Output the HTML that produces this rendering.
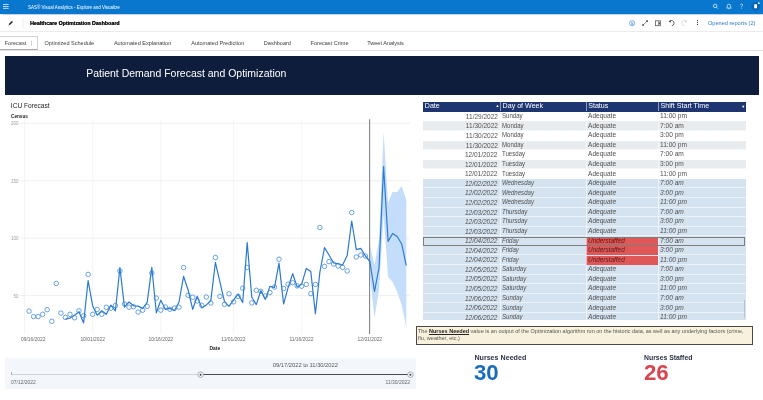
<!DOCTYPE html>
<html><head><meta charset="utf-8">
<style>
*{margin:0;padding:0;box-sizing:border-box}
html,body{width:763px;height:400px;overflow:hidden;background:#fff;font-family:"Liberation Sans",sans-serif;color:#333}
.a{position:absolute;white-space:nowrap}
#topbar{position:absolute;left:0;top:0;width:763px;height:13.8px;background:#0a77cf;box-shadow:0 0.6px 1px rgba(10,80,160,0.25);z-index:2}
#row2{position:absolute;left:0;top:13.2px;width:763px;height:18.8px;background:#fff;border-bottom:1px solid #ebebeb}
#tabs{position:absolute;left:0;top:50px;width:763px;height:0.8px;background:#e3e3e3}
.tab{position:absolute;top:39.6px;font-size:5.55px;color:#3d3d3d;line-height:7px}
#banner{position:absolute;left:5px;top:56.3px;width:754px;height:39.1px;background:#0f1d3d}
#table{position:absolute;left:422.8px;top:101.6px;width:323.4px;height:218px;overflow:hidden}
.hdr{position:absolute;left:0;top:0;width:323.4px;height:10.3px;background:#1d3671;color:#fff;font-size:7.1px;line-height:10.3px}
.hdr span{position:absolute;top:-0.7px}
.r{position:absolute;left:0;width:323.4px;height:9.57px;font-size:6.7px;line-height:9.57px;color:#505050;border-bottom:0.5px solid rgba(255,255,255,0.5)}
.r span{position:absolute;top:0.3px}
.it{font-style:italic}
.c1{right:248.5px;text-align:right;font-size:6.9px;margin-top:-0.4px;transform:scaleX(0.945);transform-origin:100% 50%}
.c2{left:79.1px;font-size:7.1px;transform:scaleX(0.855);transform-origin:0 50%}
.c3{left:165.2px;font-size:7.1px;transform:scaleX(0.925);transform-origin:0 50%}
.c4{left:237.6px;font-size:7.1px;transform:scaleX(0.93);transform-origin:0 50%}
.us{left:163.7px !important;width:71.5px;background:#e05757;color:#5a1a1a;padding-left:1.6px;height:8.9px;line-height:9.4px;font-size:7.1px;transform:none !important}
.ust{font-weight:normal;display:inline-block;transform:scaleX(0.905);transform-origin:0 50%}
</style></head><body><div id="root" style="position:absolute;left:0;top:0;width:763px;height:400px;will-change:transform;overflow:hidden">

<div id="topbar"></div>
<svg class="a" style="left:0;top:0;z-index:3" width="20" height="14" viewBox="0 0 20 14">
  <rect x="3" y="4" width="5.6" height="0.8" fill="#fff" opacity="0.9"/>
  <rect x="3" y="6" width="5.6" height="0.8" fill="#fff" opacity="0.9"/>
  <rect x="3" y="7.9" width="5.6" height="0.8" fill="#fff" opacity="0.9"/>
</svg>
<div class="a" style="z-index:3;left:28px;top:3.5px;font-size:5.2px;line-height:6px;color:#fff;transform-origin:0 0;transform:scaleX(0.866)">SAS® Visual Analytics - Explore and Visualize</div>
<svg class="a" style="left:705px;top:0;z-index:3" width="58" height="14" viewBox="705 0 58 14">
  <circle cx="715.1" cy="5.9" r="1.75" fill="none" stroke="#fff" stroke-width="0.75" opacity="0.9"/>
  <line x1="716.4" y1="7.2" x2="717.8" y2="8.6" stroke="#fff" stroke-width="0.8" opacity="0.9"/>
  <path d="M726.5 8.1 L727.2 7.3 L727.2 6.1 Q727.3 4.2 728.9 4.2 Q730.5 4.2 730.6 6.1 L730.6 7.3 L731.3 8.1 Z" fill="none" stroke="#fff" stroke-width="0.7" opacity="0.9"/>
  <circle cx="728.9" cy="8.8" r="0.55" fill="#fff" opacity="0.9"/>
  <path d="M740.4 5.1 Q740.6 4 741.6 4 Q742.7 4.1 742.6 5.2 Q742.5 6 741.6 6.4 L741.6 7.4" fill="none" stroke="#fff" stroke-width="0.7" opacity="0.85"/>
  <circle cx="741.6" cy="8.5" r="0.4" fill="#fff" opacity="0.85"/>
  <circle cx="755.6" cy="6.5" r="4.4" fill="#0764b3"/>
  <rect x="754.2" y="4.3" width="2.8" height="4" rx="0.3" fill="#fff"/>
  <circle cx="758.8" cy="3.2" r="0.85" fill="#fff"/>
</svg>

<div id="row2"></div>
<svg class="a" style="left:0;top:13px" width="30" height="18" viewBox="0 13 30 18">
  <path d="M8.4 25.4 L9.3 23.4 L11.9 20.9 L13 22 L10.4 24.5 Z" fill="#222"/>
  <line x1="23.1" y1="17.8" x2="23.1" y2="28.4" stroke="#e6e6e6" stroke-width="0.7"/>
</svg>
<div class="a" style="left:29.9px;top:19.7px;font-size:5.5px;line-height:7px;font-weight:bold;color:#111;transform:scaleX(0.96);transform-origin:0 0;text-shadow:0.2px 0 0 #111">Healthcare Optimization Dashboard</div>
<svg class="a" style="left:620px;top:13px" width="85" height="18" viewBox="620 13 85 18">
  <circle cx="632.1" cy="23.2" r="2.6" fill="none" stroke="#5c9de0" stroke-width="0.8"/>
  <text x="632.1" y="24.9" font-size="4.2" fill="#5c9de0" text-anchor="middle" font-family="Liberation Sans" font-weight="bold">S</text>
  <line x1="643" y1="25.2" x2="647.2" y2="21" stroke="#333" stroke-width="0.6"/>
  <rect x="642.3" y="24.3" width="1.5" height="1.5" fill="#333"/>
  <rect x="646.4" y="20.3" width="1.5" height="1.5" fill="#333"/>
  <rect x="655.6" y="20.8" width="4.9" height="4.9" fill="none" stroke="#555" stroke-width="0.75"/>
  <line x1="658.4" y1="21" x2="658.4" y2="25.5" stroke="#555" stroke-width="0.6"/>
  <rect x="658.8" y="22.2" width="1.2" height="2.2" fill="#555"/>
  <path d="M670.6 20.9 Q671.6 20.2 672.6 20.6 Q674.2 21.4 674.1 23.3 Q673.9 25.2 671.8 25.7" fill="none" stroke="#3a3a3a" stroke-width="0.8"/>
  <path d="M668.7 21.2 L670.9 20.1 L670.6 22.7 Z" fill="#333"/>
  <path d="M685.4 20.9 Q684.4 20.2 683.4 20.6 Q681.8 21.4 681.9 23.3 Q682.1 25.2 684.2 25.7" fill="none" stroke="#cfd3d8" stroke-width="0.8"/>
  <path d="M687.3 21.2 L685.1 20.1 L685.4 22.7 Z" fill="#c4c8cd"/>
  <circle cx="697.5" cy="20.6" r="0.6" fill="#333"/>
  <circle cx="697.5" cy="22.5" r="0.6" fill="#333"/>
  <circle cx="697.5" cy="24.4" r="0.6" fill="#333"/>
</svg>
<div class="a" style="left:707.9px;top:19.9px;font-size:5.63px;line-height:7px;color:#3079c9">Opened reports (2)</div>

<div id="tabs"></div>
<div class="a" style="left:0;top:36px;width:37.5px;height:14px;border:0.6px solid #d2d2d2;border-left:none;border-bottom:0.9px solid #a9acb2;background:#fff"></div>
<div class="tab" style="left:4.7px">Forecast</div>
<svg class="a" style="left:30px;top:40px" width="3" height="7" viewBox="0 0 3 7"><circle cx="1.4" cy="1.3" r="0.45" fill="#777"/><circle cx="1.4" cy="3" r="0.45" fill="#777"/><circle cx="1.4" cy="4.7" r="0.45" fill="#777"/></svg>
<div class="tab" style="left:44.5px">Optimized Schedule</div>
<div class="tab" style="left:113.9px">Automated Explanation</div>
<div class="tab" style="left:191.2px">Automated Prediction</div>
<div class="tab" style="left:263.8px">Dashboard</div>
<div class="tab" style="left:310.6px">Forecast Crime</div>
<div class="tab" style="left:367.2px">Tweet Analysis</div>

<div id="banner"></div>
<div class="a" style="left:86.2px;top:66.6px;font-size:10.47px;line-height:13px;color:#fff">Patient Demand Forecast and Optimization</div>

<!-- chart -->
<div class="a" style="left:10.8px;top:102px;font-size:6.6px;line-height:8px;color:#222">ICU Forecast</div>
<div class="a" style="left:11px;top:113.6px;font-size:4.7px;line-height:6px;font-weight:bold;color:#222">Census</div>
<div class="a" style="left:11px;top:121.3px;font-size:4.5px;line-height:5px;color:#9aa0a8">200</div>
<div class="a" style="left:11px;top:178.8px;font-size:4.5px;line-height:5px;color:#9aa0a8">150</div>
<div class="a" style="left:11px;top:236.2px;font-size:4.5px;line-height:5px;color:#9aa0a8">100</div>
<div class="a" style="left:13.5px;top:293.6px;font-size:4.5px;line-height:5px;color:#9aa0a8">50</div>
<svg class="a" style="left:0;top:0" width="420" height="350" viewBox="0 0 420 350">
<line x1="20" y1="123.3" x2="410" y2="123.3" stroke="#ebebee" stroke-width="0.8"/>
<line x1="20" y1="180.8" x2="410" y2="180.8" stroke="#ebebee" stroke-width="0.8"/>
<line x1="20" y1="238.2" x2="410" y2="238.2" stroke="#ebebee" stroke-width="0.8"/>
<line x1="20" y1="295.6" x2="410" y2="295.6" stroke="#ebebee" stroke-width="0.8"/>
<line x1="24.5" y1="119.5" x2="24.5" y2="334" stroke="#f1f1f4" stroke-width="0.8"/>
<line x1="92.7" y1="119.5" x2="92.7" y2="334" stroke="#f1f1f4" stroke-width="0.8"/>
<line x1="160.8" y1="119.5" x2="160.8" y2="334" stroke="#f1f1f4" stroke-width="0.8"/>
<line x1="233.6" y1="119.5" x2="233.6" y2="334" stroke="#f1f1f4" stroke-width="0.8"/>
<line x1="301.7" y1="119.5" x2="301.7" y2="334" stroke="#f1f1f4" stroke-width="0.8"/>
<line x1="369.9" y1="119.5" x2="369.9" y2="334" stroke="#f1f1f4" stroke-width="0.8"/>
<polygon points="369.9,245.0 374.5,265.0 379.0,240.0 383.6,131.7 388.1,202.5 392.6,192.0 397.2,192.0 401.7,186.0 406.3,200.0 406.3,328.0 401.7,305.0 397.2,292.0 392.6,282.0 388.1,277.0 383.6,215.0 379.0,290.0 374.5,318.0 369.9,275.0" fill="#c4ddfa"/>
<line x1="369.6" y1="119.3" x2="369.6" y2="334" stroke="#6d6f73" stroke-width="0.9"/>
<polyline fill="none" stroke="#2c7ad0" stroke-width="1.2" stroke-linejoin="round" points="65.4,319.2 70.0,318.1 74.5,315.2 79.0,311.7 83.6,323.0 88.1,280.7 92.7,305.9 97.2,315.2 101.8,310.8 106.3,314.3 110.9,305.2 115.4,310.8 119.9,267.6 124.5,307.2 129.0,302.0 133.6,305.8 138.1,306.1 142.7,308.4 147.2,302.3 151.8,267.3 156.3,312.8 160.8,300.2 165.4,309.3 169.9,308.4 174.5,310.7 179.0,302.0 183.6,276.4 188.1,290.0 192.7,309.3 197.2,296.2 201.8,307.9 206.3,304.9 210.8,300.9 215.4,262.3 219.9,281.9 224.5,301.7 229.0,306.4 233.6,299.9 238.1,294.1 242.7,302.5 247.2,242.6 251.8,297.3 256.3,304.6 260.8,290.6 265.4,299.4 269.9,286.4 274.5,287.7 279.0,263.1 283.6,303.9 288.1,287.7 292.7,273.6 297.2,287.1 301.7,284.2 306.3,268.4 310.8,271.6 315.4,313.8 319.9,272.0 324.5,247.6 329.0,255.0 333.6,263.0 338.1,263.6 342.6,265.0 347.2,255.6 351.7,221.0 356.3,249.6 360.8,248.4 365.4,256.0 369.9,261.5 374.5,291.5 379.0,268.0 383.6,166.5 388.1,241.5 392.6,233.5 397.2,236.5 401.7,244.0 406.3,265.6"/>
<circle cx="29.0" cy="311.1" r="2.25" fill="none" stroke="#3a85d4" stroke-width="0.75"/>
<circle cx="33.6" cy="316.6" r="2.25" fill="none" stroke="#3a85d4" stroke-width="0.75"/>
<circle cx="38.1" cy="316.6" r="2.25" fill="none" stroke="#3a85d4" stroke-width="0.75"/>
<circle cx="42.7" cy="314.3" r="2.25" fill="none" stroke="#3a85d4" stroke-width="0.75"/>
<circle cx="47.2" cy="309.7" r="2.25" fill="none" stroke="#3a85d4" stroke-width="0.75"/>
<circle cx="51.8" cy="321.3" r="2.25" fill="none" stroke="#3a85d4" stroke-width="0.75"/>
<circle cx="56.3" cy="283.5" r="2.25" fill="none" stroke="#3a85d4" stroke-width="0.75"/>
<circle cx="60.9" cy="313.1" r="2.25" fill="none" stroke="#3a85d4" stroke-width="0.75"/>
<circle cx="65.4" cy="317.4" r="2.25" fill="none" stroke="#3a85d4" stroke-width="0.75"/>
<circle cx="70.0" cy="314.3" r="2.25" fill="none" stroke="#3a85d4" stroke-width="0.75"/>
<circle cx="74.5" cy="317.8" r="2.25" fill="none" stroke="#3a85d4" stroke-width="0.75"/>
<circle cx="79.0" cy="310.8" r="2.25" fill="none" stroke="#3a85d4" stroke-width="0.75"/>
<circle cx="83.6" cy="315.7" r="2.25" fill="none" stroke="#3a85d4" stroke-width="0.75"/>
<circle cx="88.1" cy="274.4" r="2.25" fill="none" stroke="#3a85d4" stroke-width="0.75"/>
<circle cx="92.7" cy="314.3" r="2.25" fill="none" stroke="#3a85d4" stroke-width="0.75"/>
<circle cx="97.2" cy="309.4" r="2.25" fill="none" stroke="#3a85d4" stroke-width="0.75"/>
<circle cx="101.8" cy="314.3" r="2.25" fill="none" stroke="#3a85d4" stroke-width="0.75"/>
<circle cx="106.3" cy="307.3" r="2.25" fill="none" stroke="#3a85d4" stroke-width="0.75"/>
<circle cx="110.9" cy="308.2" r="2.25" fill="none" stroke="#3a85d4" stroke-width="0.75"/>
<circle cx="115.4" cy="305.5" r="2.25" fill="none" stroke="#3a85d4" stroke-width="0.75"/>
<circle cx="119.9" cy="271.0" r="2.25" fill="none" stroke="#3a85d4" stroke-width="0.75"/>
<circle cx="124.5" cy="304.0" r="2.25" fill="none" stroke="#3a85d4" stroke-width="0.75"/>
<circle cx="129.0" cy="307.2" r="2.25" fill="none" stroke="#3a85d4" stroke-width="0.75"/>
<circle cx="133.6" cy="306.7" r="2.25" fill="none" stroke="#3a85d4" stroke-width="0.75"/>
<circle cx="138.1" cy="312.1" r="2.25" fill="none" stroke="#3a85d4" stroke-width="0.75"/>
<circle cx="142.7" cy="310.2" r="2.25" fill="none" stroke="#3a85d4" stroke-width="0.75"/>
<circle cx="147.2" cy="306.3" r="2.25" fill="none" stroke="#3a85d4" stroke-width="0.75"/>
<circle cx="151.8" cy="273.0" r="2.25" fill="none" stroke="#3a85d4" stroke-width="0.75"/>
<circle cx="156.3" cy="298.1" r="2.25" fill="none" stroke="#3a85d4" stroke-width="0.75"/>
<circle cx="160.8" cy="310.2" r="2.25" fill="none" stroke="#3a85d4" stroke-width="0.75"/>
<circle cx="165.4" cy="307.0" r="2.25" fill="none" stroke="#3a85d4" stroke-width="0.75"/>
<circle cx="169.9" cy="309.3" r="2.25" fill="none" stroke="#3a85d4" stroke-width="0.75"/>
<circle cx="174.5" cy="308.1" r="2.25" fill="none" stroke="#3a85d4" stroke-width="0.75"/>
<circle cx="179.0" cy="307.2" r="2.25" fill="none" stroke="#3a85d4" stroke-width="0.75"/>
<circle cx="183.6" cy="267.6" r="2.25" fill="none" stroke="#3a85d4" stroke-width="0.75"/>
<circle cx="188.1" cy="295.3" r="2.25" fill="none" stroke="#3a85d4" stroke-width="0.75"/>
<circle cx="192.7" cy="297.2" r="2.25" fill="none" stroke="#3a85d4" stroke-width="0.75"/>
<circle cx="197.2" cy="300.9" r="2.25" fill="none" stroke="#3a85d4" stroke-width="0.75"/>
<circle cx="201.8" cy="305.3" r="2.25" fill="none" stroke="#3a85d4" stroke-width="0.75"/>
<circle cx="206.3" cy="297.0" r="2.25" fill="none" stroke="#3a85d4" stroke-width="0.75"/>
<circle cx="210.8" cy="303.0" r="2.25" fill="none" stroke="#3a85d4" stroke-width="0.75"/>
<circle cx="215.4" cy="257.5" r="2.25" fill="none" stroke="#3a85d4" stroke-width="0.75"/>
<circle cx="219.9" cy="296.4" r="2.25" fill="none" stroke="#3a85d4" stroke-width="0.75"/>
<circle cx="224.5" cy="304.3" r="2.25" fill="none" stroke="#3a85d4" stroke-width="0.75"/>
<circle cx="229.0" cy="293.8" r="2.25" fill="none" stroke="#3a85d4" stroke-width="0.75"/>
<circle cx="233.6" cy="301.8" r="2.25" fill="none" stroke="#3a85d4" stroke-width="0.75"/>
<circle cx="238.1" cy="296.4" r="2.25" fill="none" stroke="#3a85d4" stroke-width="0.75"/>
<circle cx="242.7" cy="288.2" r="2.25" fill="none" stroke="#3a85d4" stroke-width="0.75"/>
<circle cx="247.2" cy="267.5" r="2.25" fill="none" stroke="#3a85d4" stroke-width="0.75"/>
<circle cx="251.8" cy="302.9" r="2.25" fill="none" stroke="#3a85d4" stroke-width="0.75"/>
<circle cx="256.3" cy="290.3" r="2.25" fill="none" stroke="#3a85d4" stroke-width="0.75"/>
<circle cx="260.8" cy="291.3" r="2.25" fill="none" stroke="#3a85d4" stroke-width="0.75"/>
<circle cx="265.4" cy="295.9" r="2.25" fill="none" stroke="#3a85d4" stroke-width="0.75"/>
<circle cx="269.9" cy="292.6" r="2.25" fill="none" stroke="#3a85d4" stroke-width="0.75"/>
<circle cx="274.5" cy="287.1" r="2.25" fill="none" stroke="#3a85d4" stroke-width="0.75"/>
<circle cx="279.0" cy="259.2" r="2.25" fill="none" stroke="#3a85d4" stroke-width="0.75"/>
<circle cx="283.6" cy="288.5" r="2.25" fill="none" stroke="#3a85d4" stroke-width="0.75"/>
<circle cx="288.1" cy="284.2" r="2.25" fill="none" stroke="#3a85d4" stroke-width="0.75"/>
<circle cx="292.7" cy="282.7" r="2.25" fill="none" stroke="#3a85d4" stroke-width="0.75"/>
<circle cx="297.2" cy="285.9" r="2.25" fill="none" stroke="#3a85d4" stroke-width="0.75"/>
<circle cx="301.7" cy="286.2" r="2.25" fill="none" stroke="#3a85d4" stroke-width="0.75"/>
<circle cx="306.3" cy="284.4" r="2.25" fill="none" stroke="#3a85d4" stroke-width="0.75"/>
<circle cx="310.8" cy="293.7" r="2.25" fill="none" stroke="#3a85d4" stroke-width="0.75"/>
<circle cx="315.4" cy="284.4" r="2.25" fill="none" stroke="#3a85d4" stroke-width="0.75"/>
<circle cx="319.9" cy="227.5" r="2.25" fill="none" stroke="#3a85d4" stroke-width="0.75"/>
<circle cx="324.5" cy="266.4" r="2.25" fill="none" stroke="#3a85d4" stroke-width="0.75"/>
<circle cx="329.0" cy="261.6" r="2.25" fill="none" stroke="#3a85d4" stroke-width="0.75"/>
<circle cx="333.6" cy="264.0" r="2.25" fill="none" stroke="#3a85d4" stroke-width="0.75"/>
<circle cx="338.1" cy="266.0" r="2.25" fill="none" stroke="#3a85d4" stroke-width="0.75"/>
<circle cx="342.6" cy="267.4" r="2.25" fill="none" stroke="#3a85d4" stroke-width="0.75"/>
<circle cx="347.2" cy="271.0" r="2.25" fill="none" stroke="#3a85d4" stroke-width="0.75"/>
<circle cx="351.7" cy="212.5" r="2.25" fill="none" stroke="#3a85d4" stroke-width="0.75"/>
<circle cx="356.3" cy="257.0" r="2.25" fill="none" stroke="#3a85d4" stroke-width="0.75"/>
<circle cx="360.8" cy="255.0" r="2.25" fill="none" stroke="#3a85d4" stroke-width="0.75"/>
<circle cx="365.4" cy="256.0" r="2.25" fill="none" stroke="#3a85d4" stroke-width="0.75"/>
</svg>
<div class="a" style="left:21px;top:336.5px;font-size:4.9px;line-height:5px;color:#666">09/16/2022</div>
<div class="a" style="left:80.4px;top:336.5px;font-size:4.9px;line-height:5px;color:#666">10/01/2022</div>
<div class="a" style="left:148.6px;top:336.5px;font-size:4.9px;line-height:5px;color:#666">10/16/2022</div>
<div class="a" style="left:221.3px;top:336.5px;font-size:4.9px;line-height:5px;color:#666">11/01/2022</div>
<div class="a" style="left:289.4px;top:336.5px;font-size:4.9px;line-height:5px;color:#666">11/16/2022</div>
<div class="a" style="left:357.6px;top:336.5px;font-size:4.9px;line-height:5px;color:#666">12/01/2022</div>
<div class="a" style="left:209.5px;top:345.5px;font-size:4.9px;line-height:5px;font-weight:bold;color:#222">Date</div>

<!-- slider -->
<div class="a" style="left:5px;top:357.8px;width:411.4px;height:31.2px;background:#f3f6fb"></div>
<div class="a" style="left:272.8px;top:361.6px;font-size:5.76px;line-height:6px;color:#555">09/17/2022 to 11/30/2022</div>
<div class="a" style="left:11px;top:373.8px;width:189.4px;height:1.3px;background:#cfd2d7"></div>
<div class="a" style="left:11px;top:372px;width:0.7px;height:3px;background:#b0b4ba"></div>
<div class="a" style="left:200.4px;top:373.8px;width:210px;height:1.3px;background:#474b53"></div>
<svg class="a" style="left:195px;top:369px" width="220" height="11" viewBox="195 369 220 11">
  <circle cx="200.6" cy="374.7" r="2.75" fill="#fff" stroke="#8d9097" stroke-width="0.75"/>
  <circle cx="200.6" cy="374.7" r="1.05" fill="#3d4048"/>
  <circle cx="410.4" cy="374.7" r="2.75" fill="#fff" stroke="#8d9097" stroke-width="0.75"/>
  <circle cx="410.4" cy="374.7" r="1.05" fill="#3d4048"/>
</svg>
<div class="a" style="left:11px;top:379.7px;font-size:4.96px;line-height:5px;color:#666">07/12/2022</div>
<div class="a" style="left:385.6px;top:379.7px;font-size:4.96px;line-height:5px;color:#666">11/30/2022</div>

<!-- table -->
<div id="table">
<div class="hdr">
  <span style="left:2px">Date</span>
  <span style="left:72.6px;top:-0.3px;font-size:4px">▲</span>
  <span style="left:77.4px;width:0.8px;height:10.3px;background:#8c9ab8"></span>
  <span style="left:79.8px">Day of Week</span>
  <span style="left:163.6px;width:0.8px;height:10.3px;background:#8c9ab8"></span>
  <span style="left:165.4px">Status</span>
  <span style="left:235.7px;width:0.8px;height:10.3px;background:#8c9ab8"></span>
  <span style="left:237.8px">Shift Start Time</span>
  <span style="left:318.5px;top:0;font-size:4px">▼</span>
</div>
<div class="r" style="top:10.30px;background:#ffffff">
<span class="c1">11/29/2022</span><span class="c2">Sunday</span>
<span class="c3">Adequate</span>
<span class="c4">11:00 pm</span></div>
<div class="r" style="top:19.87px;background:#e9ecef">
<span class="c1">11/30/2022</span><span class="c2">Monday</span>
<span class="c3">Adequate</span>
<span class="c4">7:00 am</span></div>
<div class="r" style="top:29.44px;background:#ffffff">
<span class="c1">11/30/2022</span><span class="c2">Monday</span>
<span class="c3">Adequate</span>
<span class="c4">3:00 pm</span></div>
<div class="r" style="top:39.01px;background:#e9ecef">
<span class="c1">11/30/2022</span><span class="c2">Monday</span>
<span class="c3">Adequate</span>
<span class="c4">11:00 pm</span></div>
<div class="r" style="top:48.58px;background:#ffffff">
<span class="c1">12/01/2022</span><span class="c2">Tuesday</span>
<span class="c3">Adequate</span>
<span class="c4">7:00 am</span></div>
<div class="r" style="top:58.15px;background:#e9ecef">
<span class="c1">12/01/2022</span><span class="c2">Tuesday</span>
<span class="c3">Adequate</span>
<span class="c4">3:00 pm</span></div>
<div class="r" style="top:67.72px;background:#ffffff">
<span class="c1">12/01/2022</span><span class="c2">Tuesday</span>
<span class="c3">Adequate</span>
<span class="c4">11:00 pm</span></div>
<div class="r it" style="top:77.29px;background:#d5e3f1">
<span class="c1">12/02/2022</span><span class="c2">Wednesday</span>
<span class="c3">Adequate</span>
<span class="c4">7:00 am</span></div>
<div class="r it" style="top:86.86px;background:#d5e3f1">
<span class="c1">12/02/2022</span><span class="c2">Wednesday</span>
<span class="c3">Adequate</span>
<span class="c4">3:00 pm</span></div>
<div class="r it" style="top:96.43px;background:#d5e3f1">
<span class="c1">12/02/2022</span><span class="c2">Wednesday</span>
<span class="c3">Adequate</span>
<span class="c4">11:00 pm</span></div>
<div class="r it" style="top:106.00px;background:#d5e3f1">
<span class="c1">12/03/2022</span><span class="c2">Thursday</span>
<span class="c3">Adequate</span>
<span class="c4">7:00 am</span></div>
<div class="r it" style="top:115.57px;background:#d5e3f1">
<span class="c1">12/03/2022</span><span class="c2">Thursday</span>
<span class="c3">Adequate</span>
<span class="c4">3:00 pm</span></div>
<div class="r it" style="top:125.14px;background:#d5e3f1">
<span class="c1">12/03/2022</span><span class="c2">Thursday</span>
<span class="c3">Adequate</span>
<span class="c4">11:00 pm</span></div>
<div class="r it" style="top:134.71px;background:#d5e3f1">
<span class="c1">12/04/2022</span><span class="c2">Friday</span>
<span class="c3 us"><b class="ust">Understaffed</b></span>
<span class="c4">7:00 am</span></div>
<div class="r it" style="top:144.28px;background:#d5e3f1">
<span class="c1">12/04/2022</span><span class="c2">Friday</span>
<span class="c3 us"><b class="ust">Understaffed</b></span>
<span class="c4">3:00 pm</span></div>
<div class="r it" style="top:153.85px;background:#d5e3f1">
<span class="c1">12/04/2022</span><span class="c2">Friday</span>
<span class="c3 us"><b class="ust">Understaffed</b></span>
<span class="c4">11:00 pm</span></div>
<div class="r it" style="top:163.42px;background:#d5e3f1">
<span class="c1">12/05/2022</span><span class="c2">Saturday</span>
<span class="c3">Adequate</span>
<span class="c4">7:00 am</span></div>
<div class="r it" style="top:172.99px;background:#d5e3f1">
<span class="c1">12/05/2022</span><span class="c2">Saturday</span>
<span class="c3">Adequate</span>
<span class="c4">3:00 pm</span></div>
<div class="r it" style="top:182.56px;background:#d5e3f1">
<span class="c1">12/05/2022</span><span class="c2">Saturday</span>
<span class="c3">Adequate</span>
<span class="c4">11:00 pm</span></div>
<div class="r it" style="top:192.13px;background:#d5e3f1">
<span class="c1">12/06/2022</span><span class="c2">Sunday</span>
<span class="c3">Adequate</span>
<span class="c4">7:00 am</span></div>
<div class="r it" style="top:201.70px;background:#d5e3f1">
<span class="c1">12/06/2022</span><span class="c2">Sunday</span>
<span class="c3">Adequate</span>
<span class="c4">3:00 pm</span></div>
<div class="r it" style="top:211.27px;background:#d5e3f1">
<span class="c1">12/06/2022</span><span class="c2">Sunday</span>
<span class="c3">Adequate</span>
<span class="c4">11:00 pm</span></div>
<div style="position:absolute;left:77.4px;top:10.3px;width:0.6px;height:210px;background:rgba(255,255,255,0.55)"></div>
<div style="position:absolute;left:163.6px;top:10.3px;width:0.6px;height:210px;background:rgba(255,255,255,0.55)"></div>
<div style="position:absolute;left:235.7px;top:10.3px;width:0.6px;height:210px;background:rgba(255,255,255,0.55)"></div>
</div>
<div class="a" style="left:744.3px;top:299.7px;width:0.8px;height:18.5px;background:#b8c2cc"></div>
<div class="a" style="left:422.8px;top:236.9px;width:322.4px;height:9px;border:0.8px solid #7d7d7d"></div>

<!-- note -->
<div class="a" style="left:416.4px;top:326.2px;width:336.2px;height:18.4px;background:#f8f2dc;border:1.1px solid #4a4a4a"></div>
<div class="a" style="left:418px;top:328.2px;font-size:5.51px;line-height:7px;color:#555">The <b style="text-decoration:underline;color:#222">Nurses Needed</b> value is an output of the Optimization algorithm run on the historic data, as well as any underlying factors (crime,<br>flu, weather, etc.)</div>

<!-- KPIs -->
<div class="a" style="left:474.4px;top:354.3px;font-size:7.14px;line-height:8px;font-weight:bold;color:#2c3346">Nurses Needed</div>
<div class="a" style="left:474.2px;top:361.8px;font-size:21.2px;line-height:21px;font-weight:bold;color:#1a6dbd;transform:scaleX(1.05);transform-origin:0 0">30</div>
<div class="a" style="left:644px;top:354.3px;font-size:6.87px;line-height:8px;font-weight:bold;color:#2c3346">Nurses Staffed</div>
<div class="a" style="left:644.2px;top:361.8px;font-size:21.2px;line-height:21px;font-weight:bold;color:#d8454e;transform:scaleX(1.05);transform-origin:0 0">26</div>

</div></body></html>
